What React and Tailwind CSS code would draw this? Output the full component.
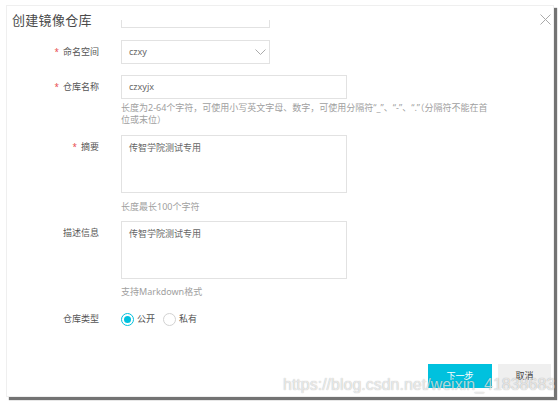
const font = { fontFamily: '"Noto Sans", "Noto Sans CJK SC", sans-serif' };

const Label = ({ required, children, className = '' }) => (
  <div className={`w-[114px] shrink-0 pr-[22px] text-right text-[9px] leading-[12px] text-[#555] whitespace-nowrap ${className}`}>
    {required && <span className="mr-[4px] text-[8px] text-[#e8484c]">*</span>}
    {children}
  </div>
);

const Help = ({ children, className = '' }) => (
  <div className={`flex ${className}`}>
    <div className="w-[114px] shrink-0" />
    <div className="text-[9px] leading-[12px] text-[#a0a0a0] whitespace-nowrap">{children}</div>
  </div>
);

const Radio = ({ checked, children }) => (
  <div className="flex items-center">
    <div
      className={`w-[13px] h-[13px] rounded-full border flex items-center justify-center ${
        checked ? 'border-[#00c1de]' : 'border-[#d2d2d2]'
      }`}
    >
      {checked && <div className="w-[7px] h-[7px] rounded-full bg-[#00c1de]" />}
    </div>
    <span className="ml-[3px] text-[9px] text-[#555]">{children}</span>
  </div>
);

const App = () => {
  return (
    <div className="w-[560px] h-[405px] bg-white pt-[5px] pl-[6px]" style={font}>
      <div className="relative w-[548px] h-[392px] border border-[#efefef] bg-white shadow-[3px_3px_1px_rgba(0,0,0,0.55)] flex flex-col">
        {/* header + cut-off field */}
        <div className="flex h-[22px]">
          <div className="w-[114px] shrink-0 pl-[5px] pt-[6px] text-[13px] leading-[16px] tracking-[0.3px] text-[#4a4a4a] whitespace-nowrap">
            创建镜像仓库
          </div>
          <div className="w-[149px] h-[8px] self-end border-x border-b border-[#e2e2e2]" />
          <svg className="ml-auto mr-[2px] mt-[8px]" width="11" height="11" viewBox="0 0 11 11">
            <path d="M0.5 0.5 L10.5 10.5 M10.5 0.5 L0.5 10.5" stroke="#aaa" strokeWidth="1" fill="none" />
          </svg>
        </div>

        {/* namespace */}
        <div className="flex items-center mt-[12px] h-[24px]">
          <Label required>命名空间</Label>
          <div className="w-[149px] h-[24px] border border-[#e2e2e2] pl-[7px] pr-[3px] flex items-center justify-between text-[9px] text-[#666]">
            <span>czxy</span>
            <svg width="11" height="6" viewBox="0 0 11 6">
              <polyline points="0.5,0.5 5.5,5.5 10.5,0.5" stroke="#aaa" strokeWidth="1" fill="none" />
            </svg>
          </div>
        </div>

        {/* repo name */}
        <div className="flex items-center mt-[11px] h-[24px]">
          <Label required>仓库名称</Label>
          <div className="w-[226px] h-[24px] border border-[#e2e2e2] px-[7px] flex items-center text-[9px] text-[#666]">
            czxyjx
          </div>
        </div>
        <Help className="mt-[3px]">
          长度为2-64个字符，可使用小写英文字母、数字，可使用分隔符“_”、“-”、“.”（分隔符不能在首
          <br />
          位或末位）
        </Help>

        {/* summary */}
        <div className="flex mt-[9px]">
          <Label required className="pt-[6px]">摘要</Label>
          <div className="w-[226px] h-[58px] border border-[#e2e2e2] px-[7px] pt-[6px] text-[9px] leading-[12px] text-[#666]">
            传智学院测试专用
          </div>
        </div>
        <Help className="mt-[8px]">长度最长100个字符</Help>

        {/* description */}
        <div className="flex mt-[8px]">
          <Label className="pt-[6px]">描述信息</Label>
          <div className="w-[226px] h-[58px] border border-[#e2e2e2] px-[7px] pt-[6px] text-[9px] leading-[12px] text-[#666]">
            传智学院测试专用
          </div>
        </div>
        <Help className="mt-[7px]">支持Markdown格式</Help>

        {/* repo type */}
        <div className="flex items-center mt-[14px] h-[14px]">
          <Label>仓库类型</Label>
          <div className="flex items-center gap-[8px]">
            <Radio checked>公开</Radio>
            <Radio>私有</Radio>
          </div>
        </div>

        {/* footer */}
        <div className="flex justify-end gap-[6px] pr-[2px] mt-[38px]">
          <button className="w-[64px] h-[24px] bg-[#00c1de] text-white text-[9px]">下一步</button>
          <button className="w-[53px] h-[24px] bg-[#efefef] text-[#444] text-[9px]">取消</button>
        </div>

        {/* watermark */}
        <div
          className="absolute left-[276px] top-[370px] text-[16px] leading-[18px] text-white/70 whitespace-nowrap [text-shadow:0_0_1px_rgba(0,0,0,0.35)]"
          style={{ fontFamily: '"Liberation Sans", Arial, sans-serif' }}
        >
          https://blog.csdn.net/weixin_41838683
        </div>
      </div>
    </div>
  );
};

export default App;
